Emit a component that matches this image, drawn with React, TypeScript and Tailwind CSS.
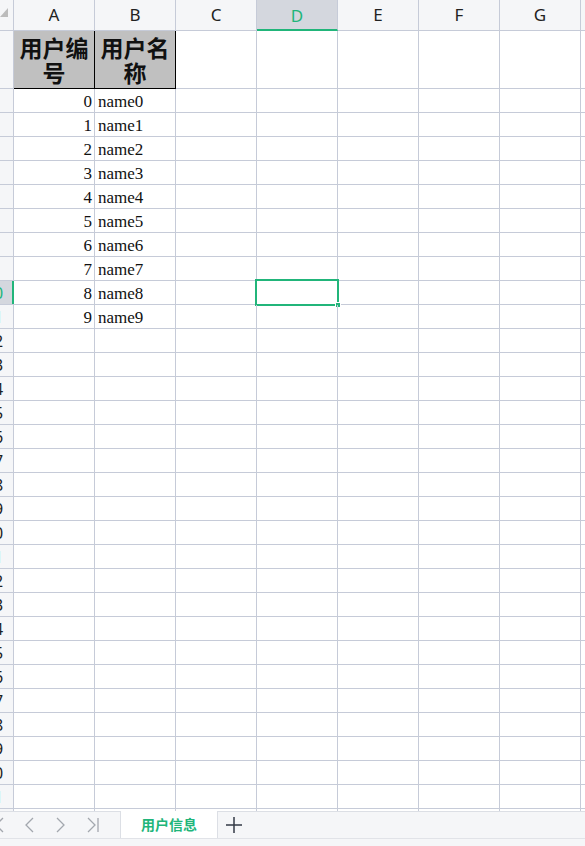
import React from "react";

const cols = ["A", "B", "C", "D", "E", "F", "G", "H"];
const line = "border-[#c6cbd8]";

function RowHead({ n, active }: { n: number; active?: boolean }) {
  return (
    <div
      className={`w-[14px] shrink-0 overflow-hidden border-r ${line} ${
        active ? "bg-[#d4d7de] border-r-2 border-r-[#21b57a]" : "bg-[#f5f6f8]"
      } relative`}
    >
      <div
        className={`absolute left-[-25px] top-0 bottom-0 w-[38px] flex items-center justify-center text-[16px] ${
          active ? "text-[#21b57a]" : "text-[#222]"
        }`}
      >
        {n}
      </div>
    </div>
  );
}

export default function App() {
  const rows = Array.from({ length: 30 }, (_, i) => i + 2);
  return (
    <div
      className="w-[585px] h-[846px] overflow-hidden bg-white flex flex-col"
      style={{ fontFamily: '"Noto Sans", "Noto Sans CJK SC", sans-serif' }}
    >
      <div className="flex-1 overflow-hidden">
        {/* column header */}
        <div className={`flex h-[31px] border-b ${line} bg-[#f5f6f8]`}>
          <div className={`w-[14px] shrink-0 border-r ${line} relative`}>
            <svg className="absolute left-0 top-[8px]" width="8" height="9" viewBox="0 0 8 9">
              <polygon points="8,0 8,9 0,9" fill="#bcbcbc" />
            </svg>
          </div>
          {cols.map((c) => (
            <div
              key={c}
              className={`w-[81px] shrink-0 border-r ${line} flex items-center justify-center text-[17px] ${
                c === "D"
                  ? "bg-[#d4d7de] text-[#21b57a] border-b-2 border-b-[#21b57a] -mb-px pt-[2px]"
                  : "text-[#222]"
              }`}
            >
              {c}
            </div>
          ))}
        </div>

        {/* row 1 */}
        <div className={`flex h-[58px] border-b ${line}`}>
          <RowHead n={1} />
          {["用户编号", "用户名称"].map((t) => (
            <div
              key={t}
              className="w-[81px] shrink-0 border-r border-b border-black -mb-px bg-[#c0c0c0] flex items-end justify-center text-center font-bold text-[23px] leading-[25px] text-[#111] pb-[3px] px-[2px]"
              style={{ fontFamily: '"Noto Sans CJK SC", serif' }}
            >
              {t}
            </div>
          ))}
          {cols.slice(2).map((c) => (
            <div key={c} className={`w-[81px] shrink-0 border-r ${line}`} />
          ))}
        </div>

        {rows.map((r) => {
          const idx = r - 2;
          const hasData = idx <= 9;
          return (
            <div key={r} className={`flex h-[24px] border-b ${line}`}>
              <RowHead n={r} active={r === 10} />
              {cols.map((c) => (
                <div
                  key={c}
                  className={`w-[81px] shrink-0 border-r ${line} relative flex items-center pt-[2px] text-[17px] text-[#111] ${
                    c === "A" ? "justify-end pr-[2px]" : "pl-[3px]"
                  }`}
                  style={{ fontFamily: '"Liberation Serif", serif' }}
                >
                  {hasData && c === "A" && idx}
                  {hasData && c === "B" && `name${idx}`}
                  {r === 10 && c === "D" && (
                    <>
                      <div className="absolute -left-[2px] -top-[2px] right-[-2px] bottom-[-2px] border-2 border-[#21b57a]" />
                      <div className="absolute right-[-4px] bottom-[-4px] w-[6px] h-[6px] bg-[#21b57a] border border-white" />
                    </>
                  )}
                </div>
              ))}
            </div>
          );
        })}
        <div className="flex h-[3px]">
          <div className={`w-[14px] shrink-0 border-r ${line} bg-[#f5f6f8]`} />
          {cols.map((c) => (
            <div key={c} className={`w-[81px] shrink-0 border-r ${line}`} />
          ))}
        </div>
      </div>

      {/* sheet tab bar */}
      <div className="h-[35px] shrink-0 bg-[#f5f6f8] flex flex-col">
        <div className="h-[27px] flex border-t border-[#dcdfe5]">
          <div className="w-[121px] shrink-0 border-r border-[#dcdfe5] relative">
            <svg className="absolute left-[-6px] top-[5px]" width="10" height="16" viewBox="0 0 10 16">
              <path d="M9 1 L2 8 L9 15" fill="none" stroke="#a3a7ae" strokeWidth="1.3" />
            </svg>
            <svg className="absolute left-[24px] top-[5px]" width="10" height="16" viewBox="0 0 10 16">
              <path d="M9 1 L2 8 L9 15" fill="none" stroke="#a3a7ae" strokeWidth="1.3" />
            </svg>
            <svg className="absolute left-[56px] top-[5px]" width="10" height="16" viewBox="0 0 10 16">
              <path d="M1 1 L8 8 L1 15" fill="none" stroke="#a3a7ae" strokeWidth="1.3" />
            </svg>
            <svg className="absolute left-[87px] top-[5px]" width="12" height="16" viewBox="0 0 12 16">
              <path d="M1 1 L8 8 L1 15 M11 1 L11 15" fill="none" stroke="#a3a7ae" strokeWidth="1.3" />
            </svg>
          </div>
          <div className="w-[97px] shrink-0 bg-white -mt-px border-r border-[#dcdfe5] flex items-center justify-center text-[14px] font-bold text-[#21b57a]" style={{ fontFamily: '"Noto Sans CJK SC", sans-serif' }}>
            用户信息
          </div>
          <div className="w-[32px] flex items-center justify-center">
            <svg width="18" height="18" viewBox="0 0 18 18">
              <path d="M9 1 V17 M1 9 H17" fill="none" stroke="#333a45" strokeWidth="1.5" />
            </svg>
          </div>
        </div>
        <div className="border-t border-[#e1e3e8] flex-1 bg-[#f5f6f8]" />
      </div>
    </div>
  );
}
